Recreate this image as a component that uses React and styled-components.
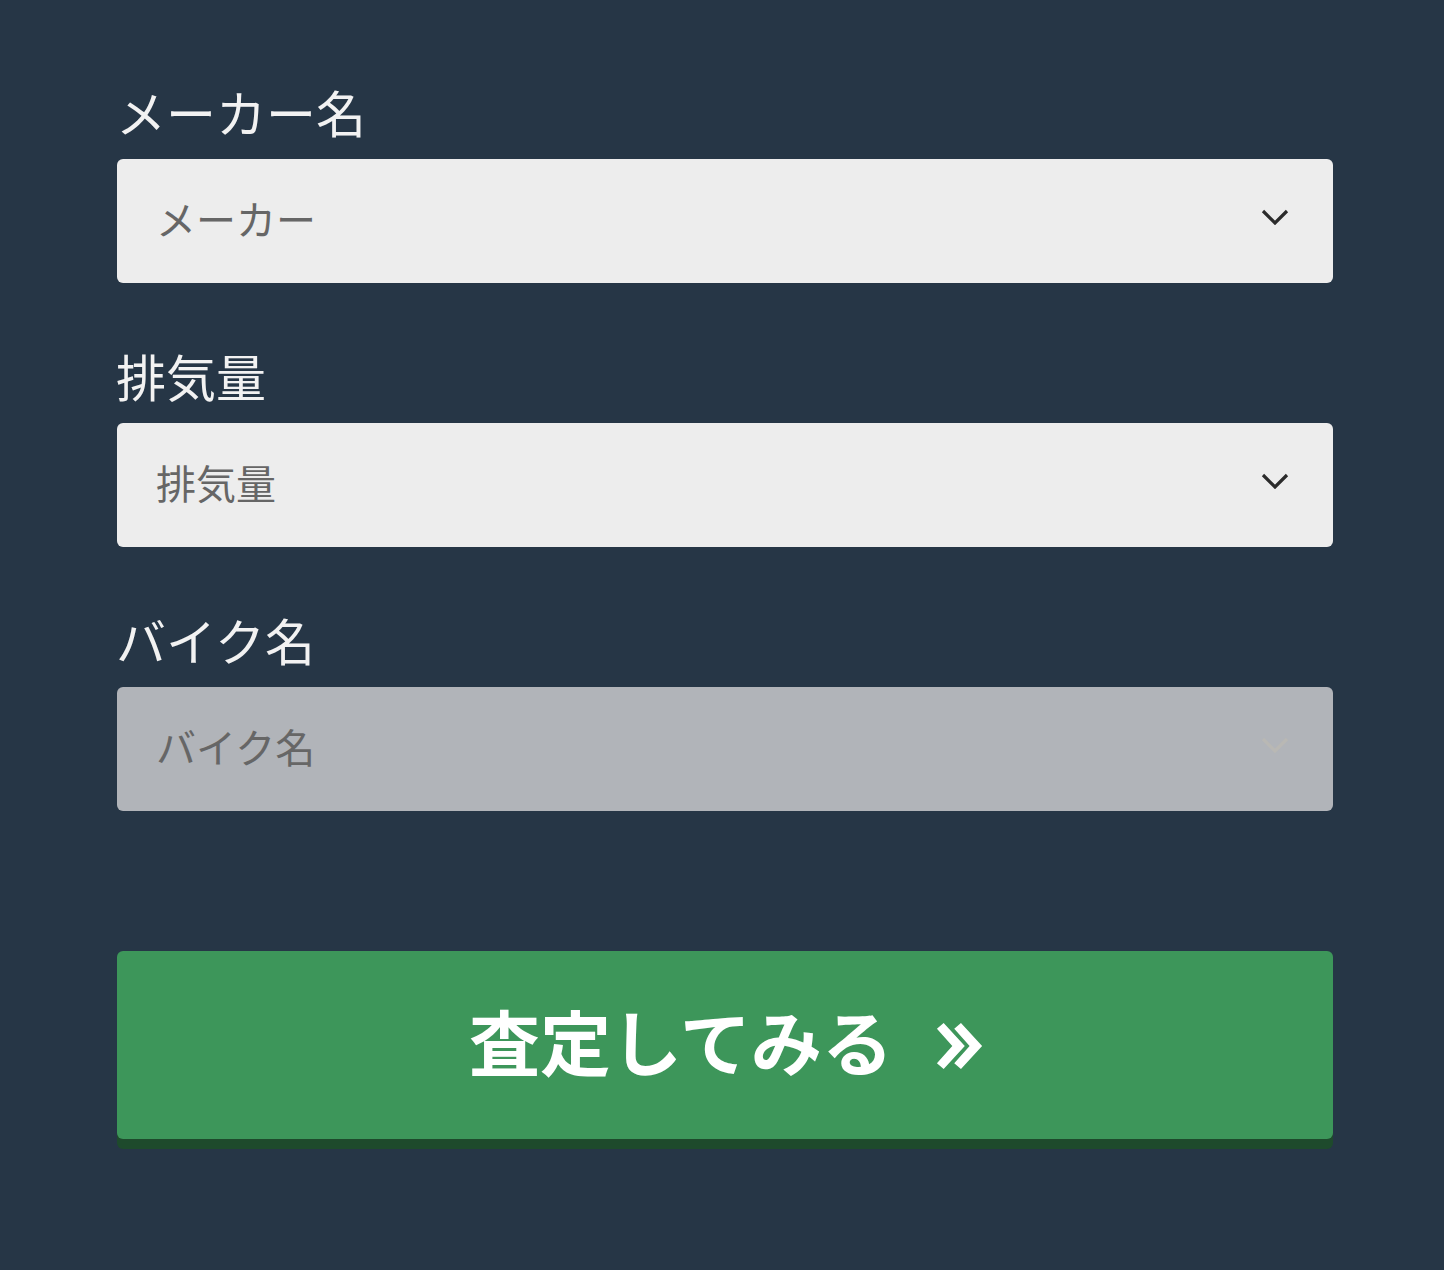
import React from 'react'
import styled, { createGlobalStyle } from 'styled-components'

const GlobalStyle = createGlobalStyle`
  html, body {
    margin: 0;
    padding: 0;
    background: #263646;
  }
  body {
    font-family: "Noto Sans CJK JP", "Noto Sans", sans-serif;
  }
`

const Page = styled.div`
  min-height: 1270px;
  background: #263646;
  padding: 79px 111px 0 117px;
  box-sizing: border-box;
`

const Form = styled.form`
  display: flex;
  flex-direction: column;
  width: 1216px;
`

const Field = styled.div`
  display: flex;
  flex-direction: column;
  gap: 16px;
  margin-bottom: 60px;
`

const Label = styled.label`
  color: #f2f2f2;
  font-size: 50px;
  line-height: 64px;
  height: 64px;
  margin-left: -1px;
`

const SelectBox = styled.div`
  height: 124px;
  border-radius: 6px;
  background: ${(p) => (p.disabled ? '#b1b4b9' : '#ededed')};
  display: flex;
  align-items: center;
  padding: 0 44px 0 39px;
  box-sizing: border-box;
  justify-content: space-between;
`

const Placeholder = styled.span`
  color: #666666;
  font-size: 40px;
  line-height: 1;
  margin-top: -6px;
`

const Chevron = styled.svg`
  width: 28px;
  height: 16px;
  margin-top: -8px;
  color: ${(p) => (p.disabled ? '#b9b8b4' : '#2b2b2b')};
`

const SubmitButton = styled.button`
  margin-top: 80px;
  height: 188px;
  border: none;
  border-radius: 6px;
  background: #3d965a;
  box-shadow: 0 10px 0 #1e4a2c;
  color: #ffffff;
  font-family: "Noto Sans CJK JP", "Noto Sans", sans-serif;
  font-weight: 700;
  font-size: 71px;
  display: flex;
  align-items: center;
  justify-content: center;
  gap: 42px;
  cursor: pointer;
  padding: 0 0 12px 4px;
`

const ArrowIcon = styled.svg`
  width: 50px;
  height: 48px;
  margin-top: 14px;
`

const fields = [
  { label: 'メーカー名', placeholder: 'メーカー' },
  { label: '排気量', placeholder: '排気量' },
  { label: 'バイク名', placeholder: 'バイク名', disabled: true },
]

const App = () => {
  return (
    <Page>
      <GlobalStyle />
      <Form onSubmit={(e) => e.preventDefault()}>
        {fields.map((f) => (
          <Field key={f.label}>
            <Label>{f.label}</Label>
            <SelectBox disabled={f.disabled}>
              <Placeholder>{f.placeholder}</Placeholder>
              <Chevron viewBox="0 0 28 16" disabled={f.disabled}>
                <path d="M2 2 L14 14 L26 2" fill="none" stroke="currentColor" strokeWidth="3.2" />
              </Chevron>
            </SelectBox>
          </Field>
        ))}
        <SubmitButton type="submit">
          <span>査定してみる</span>
          <ArrowIcon viewBox="0 0 52 48">
            <path d="M2 6 L9 0 L31 24 L9 48 L2 42 L18 24 Z" fill="#fff" />
            <path d="M20 6 L27 0 L49 24 L27 48 L20 42 L36 24 Z" fill="#fff" />
          </ArrowIcon>
        </SubmitButton>
      </Form>
    </Page>
  )
}

export default App
